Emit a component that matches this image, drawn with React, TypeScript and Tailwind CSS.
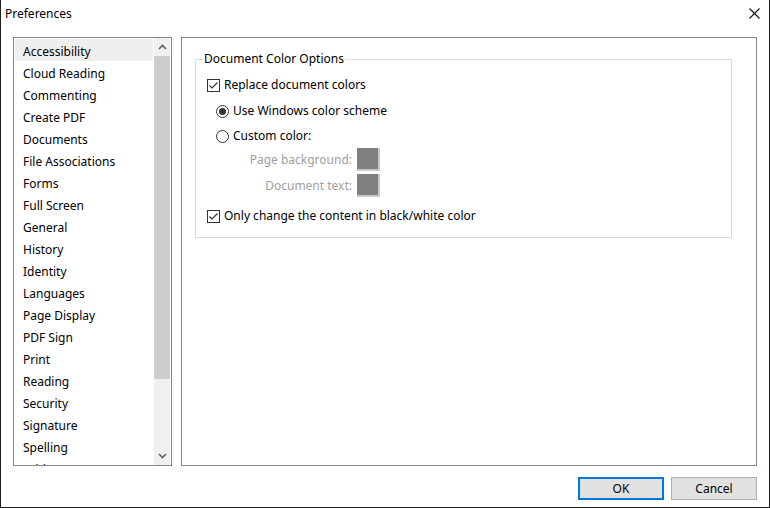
import React from 'react';

const items = [
  'Accessibility',
  'Cloud Reading',
  'Commenting',
  'Create PDF',
  'Documents',
  'File Associations',
  'Forms',
  'Full Screen',
  'General',
  'History',
  'Identity',
  'Languages',
  'Page Display',
  'PDF Sign',
  'Print',
  'Reading',
  'Security',
  'Signature',
  'Spelling',
  'Tablet',
];

const CheckBox: React.FC<{ checked?: boolean }> = ({ checked }) => (
  <div className="w-[13px] h-[13px] border border-[#333333] bg-white flex items-center justify-center shrink-0">
    {checked && (
      <svg width="11" height="11" viewBox="0 0 11 11">
        <path d="M1.5 5.5 L4 8 L9.5 2.5" fill="none" stroke="#333333" strokeWidth="1.2" />
      </svg>
    )}
  </div>
);

const Radio: React.FC<{ checked?: boolean }> = ({ checked }) => (
  <div className="w-[13px] h-[13px] rounded-full border border-[#333333] bg-white flex items-center justify-center shrink-0">
    {checked && <div className="w-[7px] h-[7px] rounded-full bg-[#333333]" />}
  </div>
);

const Swatch = () => (
  <div className="w-[23px] h-[23px] bg-[#808080] border-r-2 border-b-2 border-[#c8c8c8]" />
);

const Chevron: React.FC<{ up?: boolean }> = ({ up }) => (
  <svg width="9" height="6" viewBox="0 0 9 6">
    <path
      d={up ? 'M1 5 L4.5 1.5 L8 5' : 'M1 1 L4.5 4.5 L8 1'}
      fill="none"
      stroke="#606060"
      strokeWidth="1.6"
    />
  </svg>
);

export default function App() {
  return (
    <div
      className="w-[770px] h-[508px] bg-white border-l border-r border-b border-[#1f1f1f] flex flex-col text-[12px] text-black"
      style={{ fontFamily: '"Noto Sans", sans-serif' }}
    >
      {/* title bar */}
      <div className="h-[37px] flex items-start justify-between">
        <div className="pl-[4px] pt-[5px] leading-[18px]">Preferences</div>
        <div className="pt-[8px] pr-[9px]">
          <svg width="11" height="11" viewBox="0 0 11 11">
            <path d="M0.5 0.5 L10.5 10.5 M10.5 0.5 L0.5 10.5" stroke="#111111" strokeWidth="1.1" />
          </svg>
        </div>
      </div>

      <div className="flex px-[12px] gap-[9px] h-[429px]">
        {/* category list */}
        <div className="w-[159px] border border-[#828790] flex overflow-hidden">
          <div className="flex-1 p-[1px] overflow-hidden">
            {items.map((name, i) => (
              <div
                key={name}
                className={`h-[22px] pt-[4px] leading-[18px] pl-[8px] whitespace-nowrap ${i === 0 ? 'bg-[#efefef]' : ''}`}
              >
                {name}
              </div>
            ))}
          </div>
          <div className="w-[16px] mr-[1px] bg-[#f0f0f0] flex flex-col">
            <div className="h-[18px] flex items-center justify-center">
              <Chevron up />
            </div>
            <div className="h-[323px] bg-[#cdcdcd]" />
            <div className="flex-1" />
            <div className="h-[18px] flex items-center justify-center">
              <Chevron />
            </div>
          </div>
        </div>

        {/* settings panel */}
        <div className="flex-1 border border-[#828790] pl-[13px] pr-[24px] pt-[13px]">
          <fieldset className="border border-[#dcdcdc] px-0 pb-[8px]">
            <legend className="ml-[7px] px-[1px] leading-[16px]">Document Color Options</legend>
            <div className="pt-[5px]">
              <div className="h-[26px] flex items-center pl-[11px] gap-[4px]">
                <CheckBox checked />
                <span>Replace document colors</span>
              </div>
              <div className="h-[26px] flex items-center pl-[20px] gap-[4px]">
                <Radio checked />
                <span>Use Windows color scheme</span>
              </div>
              <div className="h-[24px] flex items-center pl-[20px] gap-[4px]">
                <Radio />
                <span>Custom color:</span>
              </div>
              <div className="h-[23px] flex items-center gap-[5px]">
                <span className="w-[156px] text-right text-[#a0a0a0]">Page background:</span>
                <Swatch />
              </div>
              <div className="h-[23px] mt-[3px] flex items-center gap-[5px]">
                <span className="w-[156px] text-right text-[#a0a0a0]">Document text:</span>
                <Swatch />
              </div>
              <div className="h-[26px] mt-[6px] flex items-center pl-[11px] gap-[4px]">
                <CheckBox checked />
                <span>Only change the content in black/white color</span>
              </div>
            </div>
          </fieldset>
        </div>
      </div>

      {/* buttons */}
      <div className="flex justify-end gap-[7px] pr-[12px] pt-[11px]">
        <button className="w-[86px] h-[23px] bg-[#e1e1e1] border-2 border-[#0078d7] leading-[19px]">OK</button>
        <button className="w-[86px] h-[23px] bg-[#e1e1e1] border border-[#adadad] leading-[21px]">Cancel</button>
      </div>
    </div>
  );
}
